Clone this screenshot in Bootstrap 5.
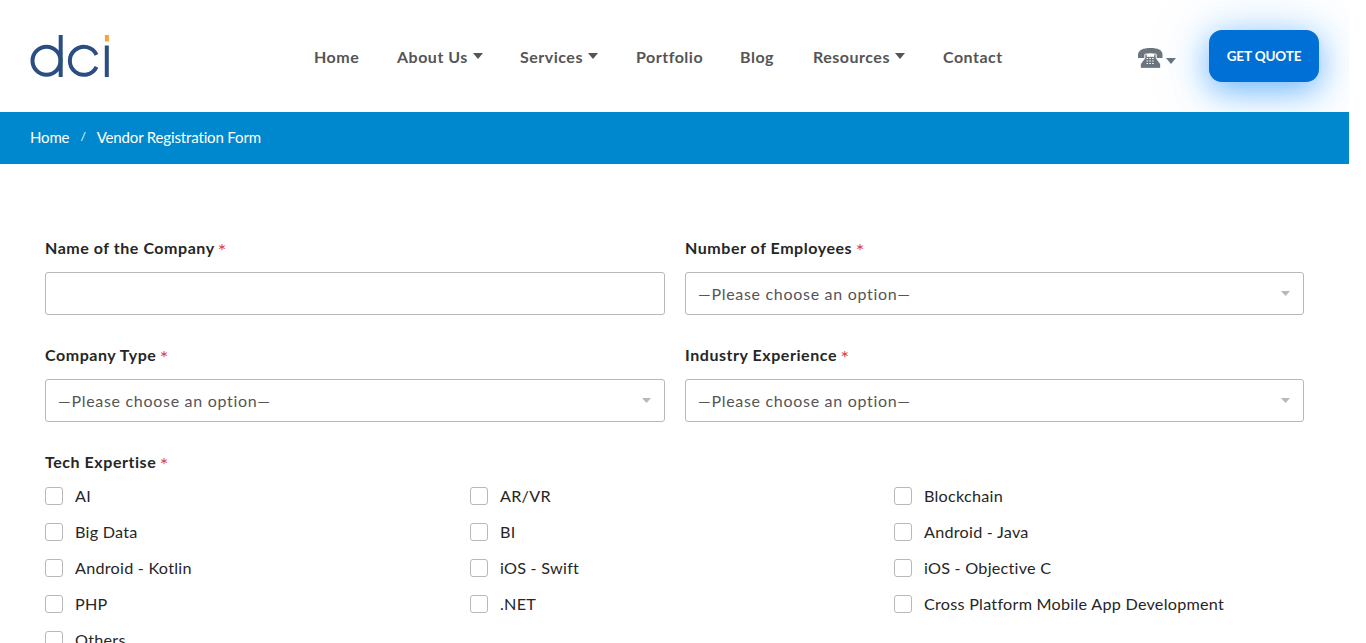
<!DOCTYPE html>
<html lang="en">
<head>
<meta charset="utf-8">
<meta name="viewport" content="width=device-width, initial-scale=1">
<title>Vendor Registration Form</title>
<link href="https://cdn.jsdelivr.net/npm/bootstrap@5.3.0/dist/css/bootstrap.min.css" rel="stylesheet">
<style>
html{overflow:hidden}
body{font-family:Lato,"Open Sans",sans-serif;font-size:16px;color:#262626;background:#fff;height:643px;overflow:hidden}
.page-shell{width:1349px;height:643px;overflow:hidden}
.site-head{height:112px;padding:0 30px;overflow:hidden}
.brand-box{width:284px;height:48px}
.main-menu{height:24px;line-height:24px;margin-top:2px}
.main-menu a{color:#555;font-weight:700;font-size:16px;letter-spacing:.5px;text-decoration:none;display:flex;padding:0;white-space:nowrap}
.caret-down{width:0;height:0;border:5px solid transparent;border-top:6px solid currentColor;border-bottom:0}
.main-menu .caret-down{margin:8px 0 0 5px}
.phone-drop{color:#6c757d;margin-top:4px;margin-right:33px}
.quote-btn{width:110px;height:52px;border-radius:13px;background:#006fd6;color:#fff;font-weight:700;font-size:13.500px;letter-spacing:-.15px;box-shadow:0 8px 32px #1a90ff99,0 4px 70px #1a90ff30;border:0;padding:1px 0 0}
.quote-btn:hover{background:#0064c2;color:#fff}
.crumb-bar{height:52px;background:#0088ce;padding:0 30px 1px;font-size:15px;letter-spacing:-.15px;color:#fff}
.crumb-bar a{color:#fff;text-decoration:none}
.crumb-bar .breadcrumb-item+.breadcrumb-item{padding-left:11px}
.crumb-bar .breadcrumb-item+.breadcrumb-item::before{color:#fff;padding-right:11px;font-size:12px;line-height:22px}
.vendor-form{padding:72px 45px 0}
.field-grid{display:grid;grid-template-columns:620px 619px;column-gap:20px;row-gap:28px}
.field-label{font-weight:700;height:24px;line-height:24px;margin:0 0 12px;display:block;font-size:16px;letter-spacing:.55px}
.req{color:#e03c3c;font-weight:400;font-size:20px;line-height:0;vertical-align:-4px;margin-left:-1px}
.field-box{height:43px;border:1px solid #b8b8b8;border-radius:3px;font-size:16px;color:#555;padding:0 12px;box-shadow:none}
.field-box.form-select{font-size:16px;letter-spacing:.7px;background-image:url("data:image/svg+xml,%3Csvg xmlns='http://www.w3.org/2000/svg' viewBox='0 0 9 5'%3E%3Cpath fill='%23b8b8b8' d='M0 0h9L4.500 5z'/%3E%3C/svg%3E");background-size:9px 5px;background-position:right 13px top 18px}
.tech-grid{display:grid;grid-template-columns:425px 424px 1fr;row-gap:12px}
.tech-grid .form-check{min-height:24px;height:24px;margin:0;padding:0;display:flex;align-items:center;gap:12px;font-size:16.200px;letter-spacing:.25px;white-space:nowrap}
.tech-grid .form-check-input{width:18px;height:18px;margin:0;float:none;border:1px solid #b8b8b8;border-radius:3px;flex:none}
</style>
</head>
<body>
<div class="page-shell">
<header class="site-head d-flex align-items-center">
  <a href="#" class="brand-box" aria-label="dci home">
    <svg width="82" height="48" viewBox="0 0 82 48" fill="none" stroke="#2a4d82" stroke-width="4"><circle cx="16.500" cy="28.800" r="14"/><path d="M30.700 3v42M66.500 22.800A14 14 0 1 0 66.500 34.800M76.800 13.500v31.500"/><path stroke="#f9a13a" d="M76.900 3v6.500"/></svg>
  </a>
  <nav class="main-menu d-flex">
    <a href="#" style="width:83px">Home</a><a href="#" style="width:123px">About Us<i class="caret-down"></i></a><a href="#" style="width:116px">Services<i class="caret-down"></i></a><a href="#" style="width:104px">Portfolio</a><a href="#" style="width:73px">Blog</a><a href="#" style="width:130px">Resources<i class="caret-down"></i></a><a href="#">Contact</a>
  </nav>
  <div class="ms-auto d-flex align-items-center">
    <a href="#" class="phone-drop d-flex" aria-label="Phone"><svg width="25" height="20" viewBox="0 0 25 20"><path fill="currentColor" d="M0 10V6C1 2 5 0 12.500 0S24 2 24.500 6v4h-6V6.500q-6-2.500-12 0V10z"/><path fill="currentColor" stroke="#fff" stroke-width=".7" d="M7 6h2v2.500h7V6h2v4l4.500 6v4.300h-20V16L7 10z"/><path stroke="#fff" stroke-width="1.100" stroke-dasharray="1.600 1.200" d="M8.500 10.500h8M8.500 13h8M8.500 15.500h8"/></svg><i class="caret-down" style="margin:10px 0 0 3px"></i></a>
    <button type="button" class="btn quote-btn">GET QUOTE</button>
  </div>
</header>
<nav class="crumb-bar d-flex align-items-center" aria-label="breadcrumb"><ol class="breadcrumb mb-0"><li class="breadcrumb-item"><a href="#">Home</a></li><li class="breadcrumb-item">Vendor Registration Form</li></ol></nav>
<form class="vendor-form">
  <div class="field-grid">
    <div><label class="field-label">Name of the Company <span class="req">*</span></label><input class="form-control field-box"></div>
    <div><label class="field-label">Number of Employees <span class="req">*</span></label><select class="form-select field-box"><option>—Please choose an option—</option></select></div>
    <div><label class="field-label">Company Type <span class="req">*</span></label><select class="form-select field-box"><option>—Please choose an option—</option></select></div>
    <div><label class="field-label">Industry Experience <span class="req">*</span></label><select class="form-select field-box"><option>—Please choose an option—</option></select></div>
  </div>
  <label class="field-label" style="margin:28px 0 10px">Tech Expertise <span class="req">*</span></label>
  <div class="tech-grid">
    <label class="form-check"><input class="form-check-input" type="checkbox"><span>AI</span></label>
    <label class="form-check"><input class="form-check-input" type="checkbox"><span>AR/VR</span></label>
    <label class="form-check"><input class="form-check-input" type="checkbox"><span>Blockchain</span></label>
    <label class="form-check"><input class="form-check-input" type="checkbox"><span>Big Data</span></label>
    <label class="form-check"><input class="form-check-input" type="checkbox"><span>BI</span></label>
    <label class="form-check"><input class="form-check-input" type="checkbox"><span>Android - Java</span></label>
    <label class="form-check"><input class="form-check-input" type="checkbox"><span>Android - Kotlin</span></label>
    <label class="form-check"><input class="form-check-input" type="checkbox"><span>iOS - Swift</span></label>
    <label class="form-check"><input class="form-check-input" type="checkbox"><span>iOS - Objective C</span></label>
    <label class="form-check"><input class="form-check-input" type="checkbox"><span>PHP</span></label>
    <label class="form-check"><input class="form-check-input" type="checkbox"><span>.NET</span></label>
    <label class="form-check"><input class="form-check-input" type="checkbox"><span>Cross Platform Mobile App Development</span></label>
    <label class="form-check"><input class="form-check-input" type="checkbox"><span>Others</span></label>
  </div>
</form>
</div>
<script src="https://cdn.jsdelivr.net/npm/bootstrap@5.3.0/dist/js/bootstrap.bundle.min.js"></script>
</body>
</html>
